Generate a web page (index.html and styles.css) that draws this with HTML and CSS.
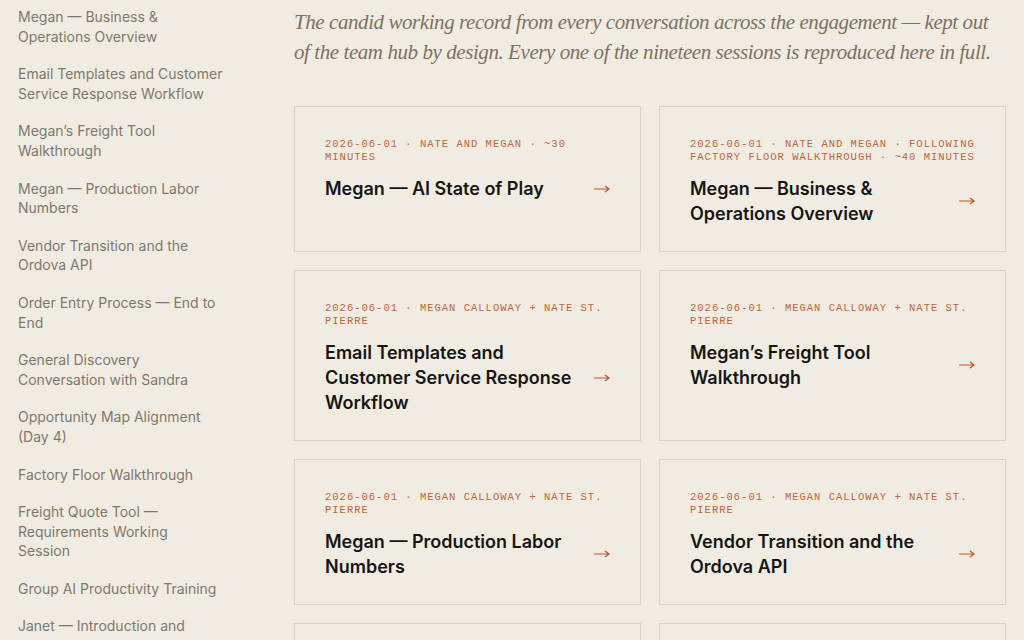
FILE: index.html
```html
<!DOCTYPE html>
<html>
<head>
  <title>Session Transcripts</title>
  <link rel="stylesheet" href="styles.css">
</head>
<body>

<div class="layout">
  <!-- Session index -->
  <nav class="sidebar">
    <a href="#">Megan — Business &amp; Operations Overview</a>
    <a href="#">Email Templates and Customer Service Response Workflow</a>
    <a href="#">Megan’s Freight Tool Walkthrough</a>
    <a href="#">Megan — Production Labor Numbers</a>
    <a href="#">Vendor Transition and the Ordova API</a>
    <a href="#">Order Entry Process — End to End</a>
    <a href="#">General Discovery Conversation with Sandra</a>
    <a href="#">Opportunity Map Alignment (Day 4)</a>
    <a href="#">Factory Floor Walkthrough</a>
    <a href="#">Freight Quote Tool — Requirements Working Session</a>
    <a href="#">Group AI Productivity Training</a>
    <a href="#">Janet — Introduction and Background</a>
  </nav>

  <main class="content">
    <p class="intro">The candid working record from every conversation across the engagement — kept out of the team hub by design. Every one of the nineteen sessions is reproduced here in full.</p>

    <div class="sessions">
      <a class="session" href="#">
        <div class="meta">2026-06-01 · Nate and Megan · ~30 minutes</div>
        <div class="session-row">
          <h3>Megan — AI State of Play</h3>
          <svg class="arrow" width="16" height="8" viewBox="0 0 16 8"><path d="M0 4H15M11 1l4 3-4 3"/></svg>
        </div>
      </a>
      <a class="session" href="#">
        <div class="meta">2026-06-01 · Nate and Megan · following factory floor walkthrough · ~40 minutes</div>
        <div class="session-row">
          <h3>Megan — Business &amp; Operations Overview</h3>
          <svg class="arrow" width="16" height="8" viewBox="0 0 16 8"><path d="M0 4H15M11 1l4 3-4 3"/></svg>
        </div>
      </a>
      <a class="session" href="#">
        <div class="meta">2026-06-01 · Megan Calloway + Nate St. Pierre</div>
        <div class="session-row">
          <h3>Email Templates and Customer Service Response Workflow</h3>
          <svg class="arrow" width="16" height="8" viewBox="0 0 16 8"><path d="M0 4H15M11 1l4 3-4 3"/></svg>
        </div>
      </a>
      <a class="session" href="#">
        <div class="meta">2026-06-01 · Megan Calloway + Nate St. Pierre</div>
        <div class="session-row">
          <h3>Megan’s Freight Tool Walkthrough</h3>
          <svg class="arrow" width="16" height="8" viewBox="0 0 16 8"><path d="M0 4H15M11 1l4 3-4 3"/></svg>
        </div>
      </a>
      <a class="session" href="#">
        <div class="meta">2026-06-01 · Megan Calloway + Nate St. Pierre</div>
        <div class="session-row">
          <h3>Megan — Production Labor Numbers</h3>
          <svg class="arrow" width="16" height="8" viewBox="0 0 16 8"><path d="M0 4H15M11 1l4 3-4 3"/></svg>
        </div>
      </a>
      <a class="session" href="#">
        <div class="meta">2026-06-01 · Megan Calloway + Nate St. Pierre</div>
        <div class="session-row">
          <h3>Vendor Transition and the Ordova API</h3>
          <svg class="arrow" width="16" height="8" viewBox="0 0 16 8"><path d="M0 4H15M11 1l4 3-4 3"/></svg>
        </div>
      </a>
      <a class="session" href="#">
        <div class="meta">2026-06-01 · Megan Calloway + Nate St. Pierre</div>
        <div class="session-row">
          <h3>Order Entry Process — End to End</h3>
          <svg class="arrow" width="16" height="8" viewBox="0 0 16 8"><path d="M0 4H15M11 1l4 3-4 3"/></svg>
        </div>
      </a>
      <a class="session" href="#">
        <div class="meta">2026-06-02 · Nate and Sandra</div>
        <div class="session-row">
          <h3>General Discovery Conversation with Sandra</h3>
          <svg class="arrow" width="16" height="8" viewBox="0 0 16 8"><path d="M0 4H15M11 1l4 3-4 3"/></svg>
        </div>
      </a>
    </div>
  </main>
</div>

</body>
</html>
```

FILE: styles.css
```css
body {
  margin: 0;
  background-color: #f1ece2;
  font-family: Inter, "Noto Sans", sans-serif;
  color: #141414;
}

a {
  text-decoration: none;
  color: inherit;
}

.layout {
  display: flex;
  padding: 0 18px 40px 18px;
}

/* Left column: list of every session */
.sidebar {
  width: 204.5px;
  flex: none;
  display: flex;
  flex-direction: column;
  gap: 18px;
  padding-top: 7px;
  margin-right: 71.5px;
}

.sidebar a {
  font-size: 14px;
  line-height: 19.6px;
  color: #7d786f;
}

.content {
  flex: 1;
  padding-top: 7px;
}

.intro {
  margin: 0 0 39px 0;
  font-family: "Liberation Serif", serif;
  font-style: italic;
  font-size: 21px;
  line-height: 30px;
  letter-spacing: -0.43px;
  color: #7e7163;
}

/* Session cards */
.sessions {
  display: grid;
  grid-template-columns: 1fr 1fr;
  gap: 18px;
}

.session {
  border: 1px solid #d9d3c8;
  padding: 31px 30px 25px 30px;
}

.meta {
  margin-right: -4px;
  font-family: "Liberation Mono", monospace;
  font-size: 10.5px;
  line-height: 13px;
  letter-spacing: 1px;
  text-transform: uppercase;
  color: #c2643a;
}

.session-row {
  display: flex;
  align-items: center;
  margin-top: 12px;
}

.session h3 {
  flex: 1;
  margin: 0 14px 0 0;
  font-size: 18px;
  line-height: 25px;
  font-weight: 600;
  color: #151515;
}

.arrow {
  flex: none;
  fill: none;
  stroke: #c2552a;
  stroke-width: 1.2;
}
```
